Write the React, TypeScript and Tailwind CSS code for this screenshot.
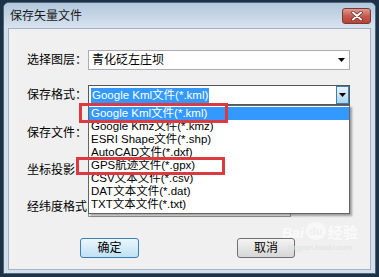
const items = [
  "Google Kml文件(*.kml)",
  "Google Kmz文件(*.kmz)",
  "ESRI Shape文件(*.shp)",
  "AutoCAD文件(*.dxf)",
  "GPS航迹文件(*.gpx)",
  "CSV文本文件(*.csv)",
  "DAT文本文件(*.dat)",
  "TXT文本文件(*.txt)",
];

function Tri() {
  return (
    <svg width="7" height="4" viewBox="0 0 7 4">
      <path d="M0 0H7L3.5 4Z" fill="#000" />
    </svg>
  );
}

function Label({ children }: { children: React.ReactNode }) {
  return <div className="w-[61px] shrink-0 whitespace-nowrap leading-[20px]">{children}</div>;
}

export default function App() {
  return (
    <div className="w-[379px] h-[277px] bg-[#1d3345] pt-[2px] px-[3px] pb-[3px] flex flex-col text-[12px] text-black font-['Liberation_Sans','Noto_Sans_CJK_SC',sans-serif]">
      <div className="flex-1 flex flex-col rounded-t-[6px] bg-[#d3dfeb] border border-[#50667c]">
        {/* title bar */}
        <div className="h-[25px] flex items-center pl-[6px] pr-[4px] rounded-t-[5px] bg-gradient-to-b from-[#b2c7dd] to-[#d8e3ef]">
          <div className="flex-1 text-[12px] text-[#1a1a1a] leading-none">保存矢量文件</div>
          <div className="w-[29px] h-[16px] rounded-[3px] border border-[#7a3a34] bg-gradient-to-b from-[#dc9b90] via-[#c75a4f] to-[#b84236] flex items-center justify-center">
            <svg width="12" height="10" viewBox="0 0 12 10">
              <path d="M2 1.5L10 8.5M10 1.5L2 8.5" stroke="#5a2020" strokeWidth="3.2" strokeLinecap="round" />
              <path d="M2 1.5L10 8.5M10 1.5L2 8.5" stroke="#ffffff" strokeWidth="2" strokeLinecap="round" />
            </svg>
          </div>
        </div>
        {/* content */}
        <div className="relative flex-1 mx-[4px] mb-[3px] border border-[#a3b3c3] bg-[#f0f0f0] pt-[21px] pl-[18px] flex flex-col">
          {/* row 1 */}
          <div className="flex items-center h-[20px]">
            <Label>选择图层：</Label>
            <div className="w-[262px] h-[20px] bg-white border border-[#abadb3] flex items-center justify-between pl-[3px] pr-[4px]">
              <span className="leading-none">青化砭左庄坝</span>
              <Tri />
            </div>
          </div>
          {/* row 2 */}
          <div className="flex items-center h-[20px] mt-[15px] relative z-10">
            <Label>保存格式：</Label>
            <div className="relative w-[262px] h-[20px]">
              <div className="w-full h-full bg-white border border-[#565656] flex items-center justify-between pl-[2px]">
                <span className="h-[15px] leading-[15px] px-[1px] bg-[#3399ff] text-white whitespace-nowrap text-[11.5px]">Google Kml文件(*.kml)</span>
                <div className="w-[13px] h-[18px] border border-[#3c7fb1] bg-gradient-to-b from-[#e8f4fc] to-[#a9d3f0] flex items-center justify-center">
                  <Tri />
                </div>
              </div>
              {/* dropdown list */}
              <div className="absolute left-0 top-full w-[262px] bg-white border border-[#646464] pt-[1px] pb-[2px] shadow-[2px_2px_2px_rgba(0,0,0,0.35)] text-[11.5px]">
                {items.map((t, i) => (
                  <div
                    key={t}
                    className={
                      i === 0
                        ? "h-[13px] leading-[13px] pl-[2px] whitespace-nowrap bg-[#3399ff] text-white"
                        : "h-[13px] leading-[13px] pl-[2px] whitespace-nowrap"
                    }
                  >
                    {t}
                  </div>
                ))}
              </div>
            </div>
          </div>
          {/* row 3 */}
          <div className="flex items-center h-[20px] mt-[18px]">
            <Label>保存文件：</Label>
            <div className="w-[262px] h-[20px] bg-white border border-[#abadb3]" />
          </div>
          {/* row 4 */}
          <div className="flex items-center h-[20px] mt-[17px]">
            <Label>坐标投影：</Label>
            <div className="w-[262px] h-[20px] bg-white border border-[#abadb3]" />
          </div>
          {/* row 5 */}
          <div className="flex items-center h-[20px] mt-[17px]">
            <Label>经纬度格式</Label>
            <div className="w-[203px] h-[20px] bg-white border border-[#9a9a9a]" />
          </div>
          {/* buttons */}
          <div className="flex mt-[21px] pl-[53px] gap-[98px]">
            <div className="w-[59px] h-[20px] rounded-[3px] border border-[#3c7fb1] bg-gradient-to-b from-[#eaf6fd] to-[#bfe1f5] flex items-center justify-center leading-none">
              确定
            </div>
            <div className="w-[58px] h-[20px] rounded-[3px] border border-[#707070] bg-gradient-to-b from-[#f4f4f4] to-[#d6d6d6] flex items-center justify-center leading-none">
              取消
            </div>
          </div>

          {/* red annotation boxes */}
          <div className="absolute left-[70px] top-[74px] w-[149px] h-[20px] border-[3px] border-[#dc3a40] z-20" />
          <div className="absolute left-[67px] top-[128px] w-[149px] h-[18px] border-[3px] border-[#dc3a40] z-20" />

          {/* watermark */}
          <div className="absolute left-[273px] top-[193px] z-30 flex flex-col items-center text-white/70 pointer-events-none">
            <div className="flex items-end gap-[2px] font-bold">
              <span className="text-[14px] leading-none italic">Bai</span>
              <span className="w-[20px] h-[18px] rounded-full bg-white/50 text-[#f0f0f0] text-[11px] leading-[18px] text-center">du</span>
              <span className="text-[15px] leading-none">经验</span>
            </div>
            <span className="text-[8px] leading-none mt-[4px] text-[#e2e2e2]">jingyan.baidu.com</span>
          </div>
        </div>
      </div>
    </div>
  );
}
